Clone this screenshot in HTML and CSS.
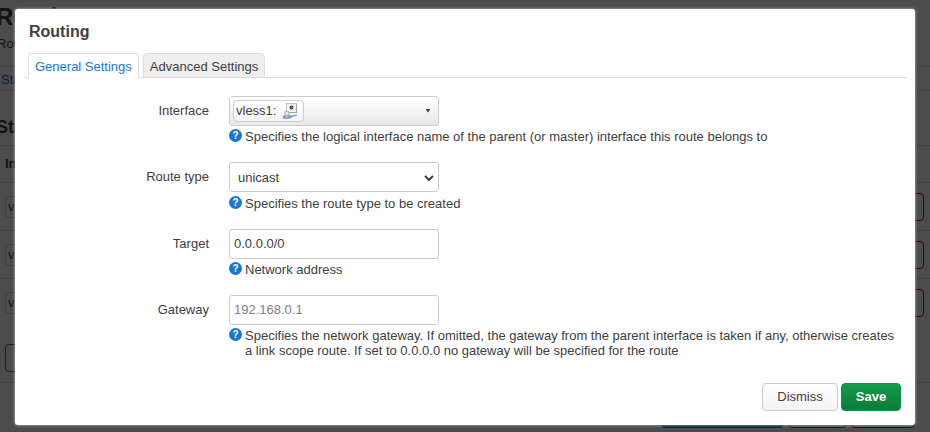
FILE: index.html
```
<!DOCTYPE html>
<html lang="en">
<head>
<meta charset="utf-8">
<title>Routing</title>
<link rel="stylesheet" href="styles.css">
</head>
<body>
<div class="page">
  <h2>Routing</h2>
  <p class="intro">Rou</p>
  <div class="page-tabs"><a>Sta</a></div>
  <h3>Sta</h3>
  <div class="table">
    <div class="tr head"><b>In</b></div>
    <div class="tr"><span class="badge">v</span><span class="delete"></span></div>
    <div class="tr"><span class="badge">v</span><span class="delete"></span></div>
    <div class="tr"><span class="badge">v</span><span class="delete"></span></div>
  </div>
  <div class="add-row"><span class="add"></span></div>
  <div class="page-actions"><span class="apply"></span><span class="save-all"></span><span class="reset"></span></div>
</div>
<div class="overlay">
  <div class="modal">
    <h4>Routing</h4>
    <ul class="tabs"><li class="active">General Settings</li><li>Advanced Settings</li></ul>
    <div class="field">
      <label>Interface</label>
      <div class="value">
        <div class="dropdown">
          <span class="ifacebadge">vless1:
            <svg class="tunnel" width="16" height="16" viewBox="0 0 16 16">
              <rect x="4.5" y=".5" width="10" height="9" fill="#f3f3f0" stroke="#c4c4c0"/>
              <path d="M5 9.5h9.5V1" fill="none" stroke="#a2a29e"/>
              <circle cx="9.5" cy="4.5" r="1.9" fill="#3e3e3a"/>
              <path d="M9 4h1.5v1.3H9z" fill="#9b8e35"/>
              <path d="M.8 14.5c2-2 3.8-2.4 6-1.5 2 .7 4 .2 8-.9M.8 14.5c4 .9 8 .3 9.5-1.3" fill="none" stroke="#6c94cc" stroke-width="1.5"/>
              <path d="M3.5 8l3 .5 1 3-3 1.2-1.8-2z" fill="#e8e8e4" stroke="#9c9c98" stroke-width=".8"/>
            </svg>
          </span>
          <svg class="arrow" width="6" height="4" viewBox="0 0 6 4"><path d="M.5 0h5L3 3.5z" fill="#404040"/></svg>
        </div>
        <div class="hint"><i>?</i><span>Specifies the logical interface name of the parent (or master) interface this route belongs to</span></div>
      </div>
    </div>
    <div class="field">
      <label>Route type</label>
      <div class="value">
        <div class="control select">unicast<svg width="10" height="6" viewBox="0 0 10 6"><path d="M1 .9l4 4 4-4" fill="none" stroke="#333" stroke-width="2"/></svg></div>
        <div class="hint lower"><i>?</i><span>Specifies the route type to be created</span></div>
      </div>
    </div>
    <div class="field">
      <label>Target</label>
      <div class="value">
        <input class="control" value="0.0.0.0/0">
        <div class="hint"><i>?</i><span>Network address</span></div>
      </div>
    </div>
    <div class="field">
      <label>Gateway</label>
      <div class="value">
        <input class="control gateway" placeholder="192.168.0.1">
        <div class="hint"><i>?</i><span>Specifies the network gateway. If omitted, the gateway from the parent interface is taken if any, otherwise creates a link scope route. If set to 0.0.0.0 no gateway will be specified for the route</span></div>
      </div>
    </div>
    <div class="actions"><button>Dismiss</button><button class="primary">Save</button></div>
  </div>
</div>
</body>
</html>
```
FILE: styles.css
```
* { box-sizing: border-box; }
body {
  margin: 0;
  height: 432px;
  overflow: hidden;
  background: #fff;
  color: #404040;
  font: 13px/18px "Liberation Sans", Arial, sans-serif;
}
h2, h3, h4, p, ul { margin: 0; padding: 0; }

.page { height: 432px; overflow: hidden; }
.page h2 { margin-left: -4px; height: 34px; font-size: 24px; line-height: 33px; }
.intro { margin-left: -3px; height: 32px; line-height: 20px; }
.page-tabs { height: 25px; border-top: 1px solid #ddd; border-bottom: 1px solid #ddd; padding-left: 1px; line-height: 25px; color: #0069d6; }
.page h3 { margin-left: -4px; height: 54px; font-size: 18px; line-height: 72px; }
.table { height: 172px; }
.tr { display: flex; align-items: center; justify-content: space-between; height: 48px; padding: 0 6px 0 5px; border-top: 1px solid #ddd; }
.tr.head { height: 37px; }
.badge { height: 22px; width: 80px; padding: 1px 2px; border: 1px solid #ccc; border-radius: 4px; }
.delete { width: 60px; height: 28px; border: 1px solid #e00000; border-radius: 4px; }
.add-row { height: 66px; padding: 27px 5px 0; border-bottom: 1px solid #ddd; }
.add { display: block; width: 60px; height: 28px; border: 1px solid #093; border-radius: 4px; }
.page-actions { display: flex; justify-content: flex-end; gap: 4px; padding: 16px 15px 0 0; }
.page-actions span { height: 29px; border: 1px solid #093; border-radius: 4px; }
.page-actions .apply { width: 123px; background: #1976d2; border-color: #1976d2; }
.page-actions .save-all { width: 59px; }
.page-actions .reset { width: 64px; border-color: #e00000; }

.overlay { position: absolute; inset: 0; padding: 9px 15px 7px; background: rgba(0, 0, 0, .7); }
.modal {
  display: flex;
  flex-direction: column;
  height: 416px;
  padding: 9px 9px 14px;
  border-radius: 3px;
  background: #fff;
  box-shadow: 0 0 3px #ccc;
}
h4 { padding-left: 5px; font-size: 16px; line-height: 27px; }
.tabs { display: flex; gap: 4px; height: 33px; margin-bottom: 18px; padding: 8px 0 0 4px; border-bottom: 1px solid #ddd; list-style: none; }
.tabs li { height: 25px; padding: 0 6px; border: 1px solid #ddd; border-radius: 4px 4px 0 0; background: #eee; line-height: 26px; }
.tabs .active { border-bottom-color: #fff; background: #fff; color: #1976d2; }
.field { display: flex; gap: 20px; min-height: 66.4px; }
.field label { width: 185px; line-height: 30px; text-align: right; }
.value { width: 672px; }
.dropdown, .control { display: flex; align-items: center; justify-content: space-between; width: 210px; height: 30px; border: 1px solid #ccc; border-radius: 3px; }
.dropdown { padding: 0 7px 0 3px; background: linear-gradient(#fff, #e8e8e8); }
.ifacebadge { display: flex; align-items: center; gap: 6px; width: 71px; height: 22px; padding: 0 2px; border: 1px solid #ccc; border-radius: 4px; background: linear-gradient(#fff, #f5f5f5); }
.control { padding: 4px; background: #fff; color: #404040; font: inherit; }
.gateway { padding-bottom: 5px; padding-top: 3px; }
.control::placeholder { color: #808080; opacity: 1; }
.select { padding: 2px 4px 0 8px; }
.select svg { margin-bottom: 1px; }
.hint { display: flex; gap: 3px; padding-top: 3px; line-height: 15px; }
.hint.lower { padding-top: 4px; }
.hint i { flex: none; width: 13px; height: 13px; border-radius: 50%; background: #1976d2; color: #fff; font-size: 10px; font-style: normal; font-weight: bold; line-height: 13px; text-align: center; }
.actions { display: flex; justify-content: flex-end; gap: 3px; margin-top: auto; padding-right: 5px; }
button { width: 76px; height: 28px; padding: 0; border: 1px solid #ccc; border-radius: 4px; background: linear-gradient(#fff, #f3f3f3); color: #404040; font: inherit; }
.primary { width: 60px; border-color: #0c9346; background: linear-gradient(#139b4c, #0c7a39); color: #fff; font-weight: bold; }
```
